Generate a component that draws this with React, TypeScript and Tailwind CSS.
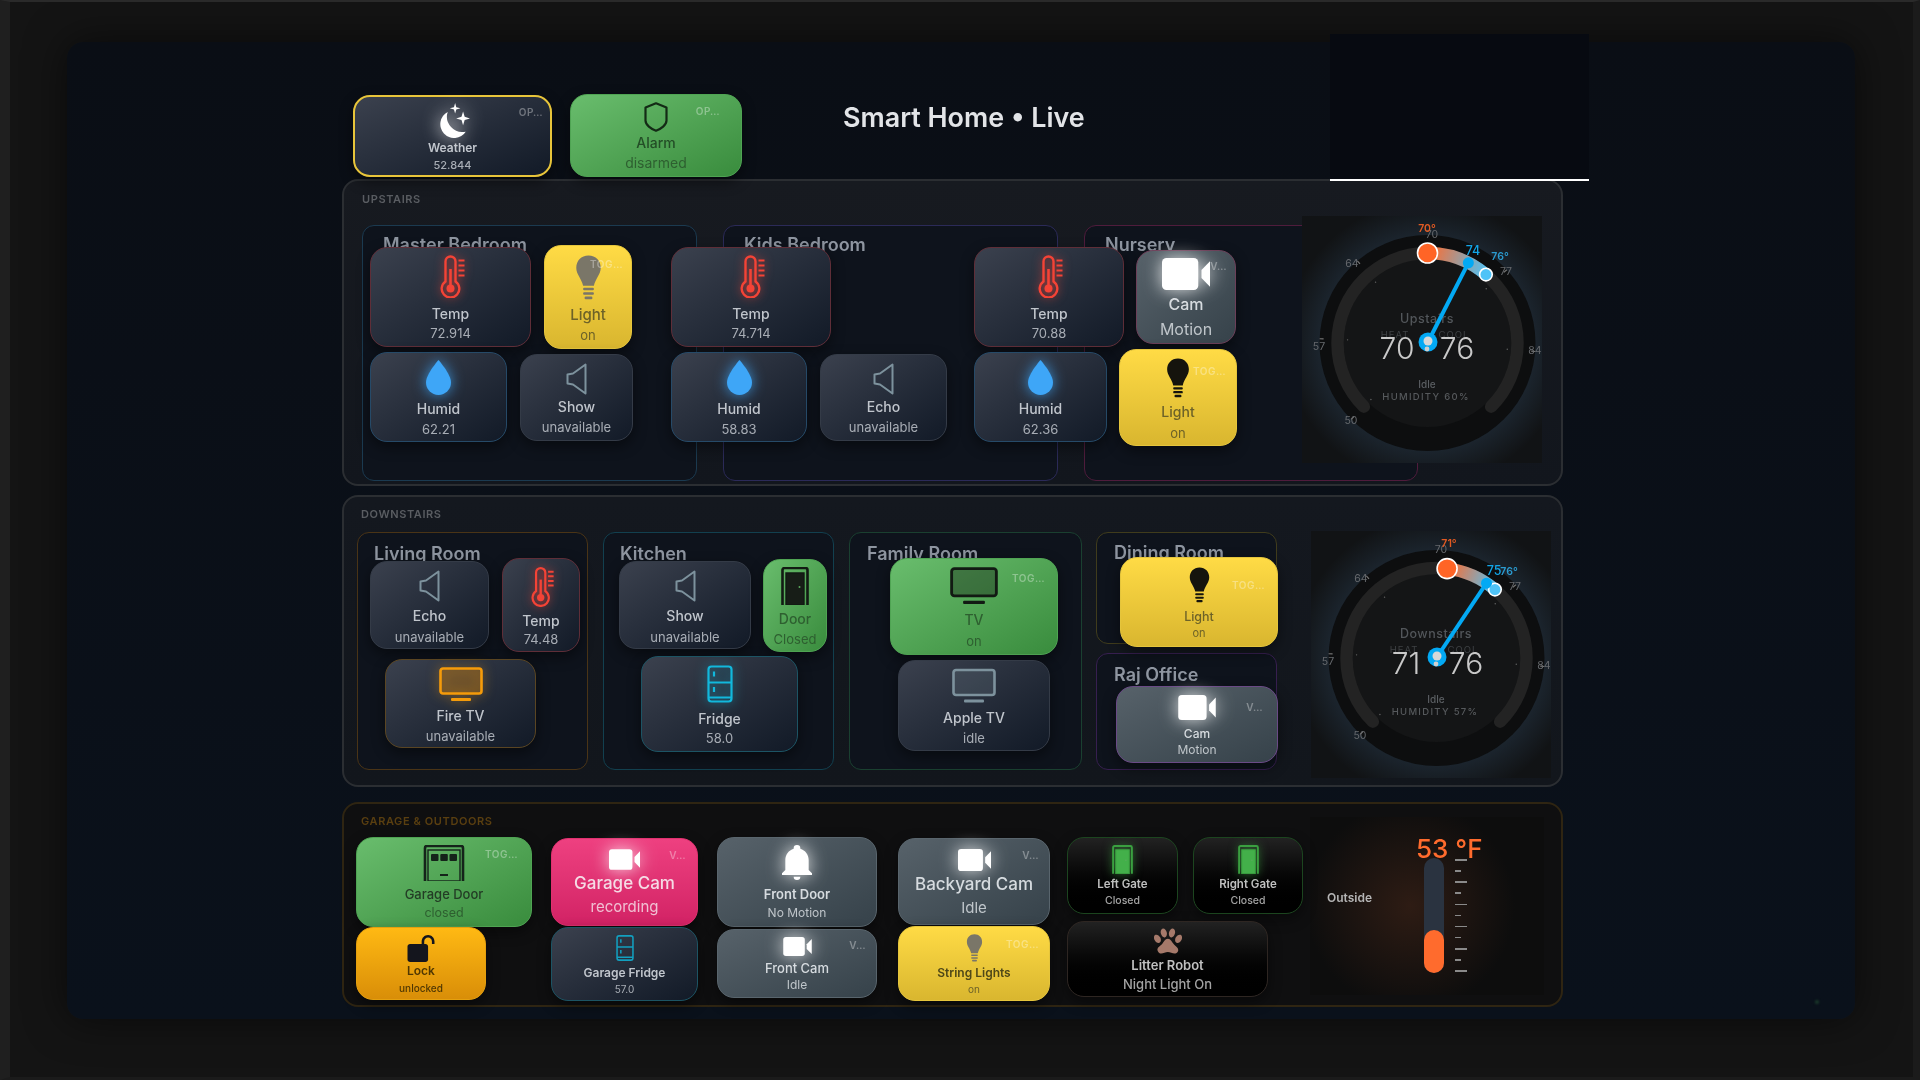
import React from "react";

type IP = { className?: string };
const Thermo = ({ className }: IP) => (
  <svg viewBox="0 0 26 43" className={`ml-[4px] ${className}`} fill="none" stroke="currentColor">
    <path d="M5.5 26.5V6.5a5 5 0 0 1 10 0v20a8.8 8.8 0 1 1-10 0Z" strokeWidth="2.4" />
    <circle cx="10.5" cy="33.5" r="4" fill="currentColor" stroke="none" />
    <path d="M10.5 14V31" strokeWidth="2.6" />
    <path d="M18.5 5.5h6M18.5 10.5h6M18.5 15.5h6M18.5 20.5h6" strokeWidth="2.2" />
  </svg>
);
const Drop = ({ className }: IP) => (
  <svg viewBox="6 3.2 12 16.8" className={className} fill="currentColor">
    <path d="M12,20A6,6 0 0,1 6,14C6,10 12,3.25 12,3.25C12,3.25 18,10 18,14A6,6 0 0,1 12,20Z" />
  </svg>
);
const Speaker = ({ className }: IP) => (
  <svg viewBox="0 0 21 32" className={className} fill="none" stroke="currentColor" strokeWidth="2" strokeLinejoin="round">
    <path d="M1.5 11.5 7 10.5 19.5 1.5V30.5L7 21.5 1.5 20.5Z" />
  </svg>
);
const Bulb = ({ className }: IP) => (
  <svg viewBox="0 0 27 46" className={className} fill="currentColor">
    <path d="M13.5 0.5C6 0.5 1 6 1 13c0 7 5.5 11 7 18.5h11C20.5 24 26 20 26 13 26 6 21 .5 13.5 .5Z" />
    <rect x="8" y="33.5" width="11" height="2.6" rx="1" />
    <rect x="8" y="38" width="11" height="2.6" rx="1" />
    <rect x="9.5" y="42.4" width="8" height="2.8" rx="1.2" />
  </svg>
);
const Video = ({ className }: IP) => (
  <svg viewBox="3 6 18 12" className={className} fill="currentColor">
    <rect x="3" y="6" width="13.6" height="12" rx="1.7" />
    <path d="M17.8 10.5 21 7.2V16.8L17.8 13.5Z" />
  </svg>
);
const Bell = ({ className }: IP) => (
  <svg viewBox="3 2 18 21" className={className} fill="currentColor">
    <path d="M21,19V20H3V19L5,17V11C5,7.9 7.03,5.17 10,4.29C10,4.19 10,4.1 10,4A2,2 0 0,1 12,2A2,2 0 0,1 14,4C14,4.1 14,4.19 14,4.29C16.97,5.17 19,7.9 19,11V17L21,19M14,21A2,2 0 0,1 12,23A2,2 0 0,1 10,21" />
  </svg>
);
const Tv = ({ className, inner }: IP & { inner: string }) => (
  <svg viewBox="0 0 44 34" className={className} fill="none" stroke="currentColor">
    <rect x="1.5" y="1.5" width="41" height="25" rx="2.5" fill={inner} strokeWidth="2.6" />
    <rect x="12" y="31" width="20" height="3" rx="1" fill="currentColor" stroke="none" />
  </svg>
);
const Fridge = ({ className }: IP) => (
  <svg viewBox="0 0 26 38" className={className} fill="none" stroke="currentColor" strokeWidth="2.2">
    <rect x="1.5" y="1.5" width="23" height="35" rx="3" />
    <path d="M1.5 17.5h23M1.5 32.5h23M7 6.5v5M7 22v5" />
  </svg>
);
const Door = ({ className, fill }: IP & { fill: string }) => (
  <svg viewBox="0 0 28 38" className={className}>
    <path d="M1.5 38V3a2 2 0 0 1 2-2h21a2 2 0 0 1 2 2v35" fill="none" stroke="currentColor" strokeWidth="2.6" />
    <path d="M5 38V6h18v32Z" fill={fill} stroke="currentColor" strokeWidth="1.4" />
    <circle cx="18.5" cy="20" r="1" fill="#5aa95d" />
  </svg>
);
const Garage = ({ className }: IP) => (
  <svg viewBox="0 0 42 36" className={className} fill="currentColor">
    <path d="M2 36V3a2 2 0 0 1 2-2h34a2 2 0 0 1 2 2v33" fill="none" stroke="currentColor" strokeWidth="2.6" />
    <rect x="5" y="5" width="32" height="31" fill="none" stroke="currentColor" strokeWidth="1.4" />
    <rect x="8" y="9" width="7.5" height="7" rx="1" />
    <rect x="17.3" y="9" width="7.5" height="7" rx="1" />
    <rect x="26.5" y="9" width="7.5" height="7" rx="1" />
    <rect x="17" y="29" width="8" height="2" />
  </svg>
);
const LockOpen = ({ className }: IP) => (
  <svg viewBox="2 1 21 21" className={className} fill="currentColor">
    <path d="M18,1C15.24,1 13,3.24 13,6V8H4C2.9,8 2,8.9 2,10V20C2,21.1 2.9,22 4,22H16C17.1,22 18,21.1 18,20V10C18,8.9 17.1,8 16,8H15V6C15,4.34 16.34,3 18,3C19.66,3 21,4.34 21,6V8H23V6C23,3.24 20.76,1 18,1Z" />
  </svg>
);
const Paw = ({ className }: IP) => (
  <svg viewBox="2 2.9 20 18.2" className={className} fill="currentColor">
    <path d="M8.35,3C9.53,2.83 10.78,4.12 11.14,5.9C11.5,7.67 10.85,9.25 9.67,9.43C8.5,9.61 7.24,8.32 6.87,6.54C6.5,4.77 7.17,3.19 8.35,3M15.5,3C16.69,3.19 17.35,4.77 17,6.54C16.62,8.32 15.37,9.61 14.19,9.43C13,9.25 12.35,7.67 12.72,5.9C13.08,4.12 14.33,2.83 15.5,3M3,7.6C4.14,7.11 5.69,8 6.5,9.55C7.26,11.13 7,12.79 5.87,13.28C4.74,13.77 3.2,12.89 2.41,11.32C1.62,9.75 1.9,8.08 3,7.6M21,7.6C22.1,8.08 22.38,9.75 21.59,11.32C20.8,12.89 19.26,13.77 18.13,13.28C17,12.79 16.74,11.13 17.5,9.55C18.31,8 19.86,7.11 21,7.6M19.33,18.38C19.37,19.32 18.65,20.36 17.79,20.75C16,21.57 13.88,19.87 11.89,19.87C9.9,19.87 7.76,21.64 6,20.75C5,20.26 4.31,18.96 4.44,17.88C4.62,16.39 6.41,15.59 7.47,14.5C8.88,13.09 9.88,10.44 11.89,10.44C13.89,10.44 14.95,13.05 16.3,14.5C17.41,15.72 19.26,16.75 19.33,18.38Z" />
  </svg>
);
const Moon = ({ className }: IP) => (
  <svg viewBox="0 0 32 33" className={className} fill="currentColor">
    <path d="M11 8.5A13 13 0 1 0 28 27 14.5 14.5 0 0 1 11 8.5Z" />
    <path d="M18 0l1.1 3.9L23 5l-3.9 1.1L18 10l-1.1-3.9L13 5l3.9-1.1Z" />
    <path d="M25.5 8l1.5 5 5 1.5-5 1.5-1.5 5-1.5-5-5-1.5 5-1.5Z" />
  </svg>
);
const Shield = ({ className }: IP) => (
  <svg viewBox="0 0 24 30" className={className} fill="none" stroke="currentColor" strokeWidth="2.2" strokeLinejoin="round">
    <path d="M12 1.3 22.5 5.5V18.5C22.5 23 17 27 12 28.8 7 27 1.5 23 1.5 18.5V5.5Z" />
  </svg>
);

const looks: Record<string, string> = {
  dark: "bg-linear-to-br from-[#3b414e] to-[#121a27] text-[#c0c5cc]",
  yellow: "bg-linear-to-b from-[#ffdb45] to-[#d9b62f] border-[#e5c53c] text-[#6d6228]",
  green: "bg-linear-to-br from-[#69bd6d] to-[#398c3d] border-[#4fa453] text-[#2e5f30]",
  amber: "bg-linear-to-b from-[#ffb913] to-[#d98e08] border-[#e5a00e] text-[#4f3703]",
  pink: "bg-linear-to-b from-[#ee4080] to-[#d22265] border-[#e0306f] text-[#f5dbe5]",
  cam: "bg-linear-to-br from-[#57626a] to-[#36424a] text-[#d6dbdf]",
  black: "bg-linear-to-b from-[#222222] to-[#000000] text-[#c0c0c0]",
};

function Card(p: {
  c: string;
  v?: string;
  icon: React.ReactNode;
  n: string;
  s: string;
  nc: string;
  sc: string;
  tag?: string;
  tc?: string;
}) {
  const v = p.v ?? "dark";
  const soft = v === "dark" || v === "cam" || v === "black" || v === "pink";
  return (
    <div
      className={`relative z-10 shrink-0 flex flex-col items-center rounded-[17px] border-[1.5px] shadow-[0_5px_14px_rgba(0,0,0,0.45)] ${looks[v]} ${p.c}`}
    >
      {p.icon}
      <div className={`font-medium whitespace-nowrap leading-[18px] ${p.nc}`}>{p.n}</div>
      <div className={`whitespace-nowrap leading-[18px] ${soft ? "opacity-85" : ""} ${p.sc}`}>{p.s}</div>
      {p.tag && (
        <div className={`absolute text-[10px] leading-[12px] font-semibold tracking-[0.5px] text-white/35 ${p.tc}`}>{p.tag}</div>
      )}
    </div>
  );
}

const red = "text-[#f44336] drop-shadow-[0_0_5px_rgba(244,67,54,0.7)]";
const blue = "text-[#3ea6f7] drop-shadow-[0_0_7px_rgba(62,166,247,0.8)]";
const glow = "text-white drop-shadow-[0_0_9px_rgba(255,255,255,0.85)]";
const spk = "text-[#7d929d]";

function Room(p: { c: string; title: string; tc: string; children?: React.ReactNode }) {
  return (
    <div className={`shrink-0 rounded-[12px] border-[1.5px] bg-[#0e131c] ${p.c}`}>
      <div className={`text-[18px] leading-[24px] font-semibold whitespace-nowrap text-[#8e95a0] ${p.tc}`}>{p.title}</div>
      {p.children}
    </div>
  );
}

function polar(a: number, r: number, cx = 125.5, cy = 127) {
  const t = (a * Math.PI) / 180;
  return [cx + r * Math.sin(t), cy - r * Math.cos(t)];
}
const ang = (v: number) => -135 + (v - 50) * 6.75;
const arc = (a: number, b: number, r: number) => {
  const [x1, y1] = polar(a, r);
  const [x2, y2] = polar(b, r);
  return `M${x1} ${y1}A${r} ${r} 0 ${b - a > 180 ? 1 : 0} 1 ${x2} ${y2}`;
};

function Gauge(p: {
  id: string;
  c: string;
  title: string;
  heat: number;
  cool: number;
  cur: number;
  hum: string;
  heatX: number;
  curX: number;
  curY: number;
}) {
  const ha = ang(p.heat);
  const ca = ang(p.cool);
  const [hx, hy] = polar(ha, 90);
  const [cx, cy] = polar(ca, 90);
  const [nx, ny] = polar(ang(p.cur), 90);
  const labels: [number, number, string][] = [
    [50, 47, "64"], [17, 130, "57"], [233, 134, "84"], [49, 204, "50"], [130, 18, "70"], [204, 55, "77"],
  ];
  const ticks = [50, 57, 64, 77, 84];
  return (
    <div className={`relative z-20 shrink-0 w-[240px] h-[247px] bg-[#111315] ${p.c}`}>
      <svg viewBox="0 0 240 247" className="w-[240px] h-[247px] [font-family:Inter,sans-serif]">
        <defs>
          <radialGradient id={`${p.id}g`} cx="50%" cy="50%" r="50%">
            <stop offset="76%" stopColor="#1b242d" />
            <stop offset="100%" stopColor="#1b242d" stopOpacity="0" />
          </radialGradient>
          <linearGradient id={`${p.id}a`} gradientUnits="userSpaceOnUse" x1={hx} y1={hy} x2={cx} y2={cy}>
            <stop offset="0%" stopColor="#ff6b2d" />
            <stop offset="100%" stopColor="#4fc3f7" />
          </linearGradient>
        </defs>
        <circle cx="125.5" cy="127" r="142" fill={`url(#${p.id}g)`} />
        <circle cx="125.5" cy="127" r="108" fill="#0d0e0f" />
        <circle cx="125.5" cy="127" r="84" fill="#141516" />
        <path d={arc(-135, 135, 90)} fill="none" stroke="#232323" strokeWidth="12.5" strokeLinecap="round" />
        <path d={arc(ha, ca, 90)} fill="none" stroke={`url(#${p.id}a)`} strokeWidth="12.5" />
        {ticks.map((t) => {
          const [a, b] = polar(ang(t), 104);
          const [c, d] = polar(ang(t), 108);
          const [e, f] = polar(ang(t), 80);
          return (
            <g key={t}>
              <line x1={a} y1={b} x2={c} y2={d} stroke="#777" strokeWidth="1.2" />
              <circle cx={e} cy={f} r="0.7" fill="#666" />
            </g>
          );
        })}
        {labels.map((l) => (
          <text key={l[2]} x={l[0]} y={l[1] + 4} textAnchor="middle" fontSize="10.5" fill="#66696d">{l[2]}</text>
        ))}
        <circle cx={hx} cy={hy} r="10" fill="#ff6426" stroke="#fff" strokeWidth="1.6" />
        <circle cx={cx} cy={cy} r="6.3" fill="#4fc3f7" stroke="#fff" strokeWidth="1.6" />
        <text x="125" y="107" textAnchor="middle" fontSize="12.5" fontWeight="500" fill="#52565a" letterSpacing="0.5">{p.title}</text>
        <text x="93" y="122" textAnchor="middle" fontSize="9.5" fill="#3e4144" letterSpacing="1">HEAT</text>
        <text x="152" y="122" textAnchor="middle" fontSize="9.5" fill="#3e4144" letterSpacing="1">COOL</text>
        <text x="95" y="143" textAnchor="middle" fontSize="30" fontWeight="300" fill="#c9c9c9">{p.heat}</text>
        <text x="155" y="143" textAnchor="middle" fontSize="30" fontWeight="300" fill="#c9c9c9">{p.cool}</text>
        <line x1="126" y1="126" x2={nx} y2={ny} stroke="#03a9f4" strokeWidth="4" />
        <circle cx={nx} cy={ny} r="5.5" fill="#03a9f4" />
        <circle cx="126" cy="126" r="9.5" fill="#03a9f4" />
        <circle cx="126" cy="125" r="4.5" fill="#d8d8d8" />
        <circle cx="125" cy="133" r="2.4" fill="#d0d0d0" />
        <text x="125" y="172" textAnchor="middle" fontSize="10" fontWeight="500" fill="#5b5f63">Idle</text>
        <text x="124" y="184" textAnchor="middle" fontSize="9.5" fontWeight="500" fill="#56595c" letterSpacing="1.3">{p.hum}</text>
        <text x={p.heatX} y="16" textAnchor="middle" fontSize="10.5" fontWeight="600" fill="#e25a22">{p.heat}°</text>
        <text x="198" y="44" textAnchor="middle" fontSize="10.5" fontWeight="600" fill="#2b9bd0">{p.cool}°</text>
        <text x={p.curX} y={p.curY} textAnchor="middle" fontSize="12.5" fontWeight="500" fill="#12a5e8">{p.cur}</text>
      </svg>
    </div>
  );
}

const tick = "h-[1.5px] bg-[#8a8a8a]";

export default function App() {
  const t14 = "text-[14px]";
  const s13 = "text-[13px]";
  return (
    <div className="relative w-[1920px] h-[1080px] overflow-hidden bg-[#141414] border-t-2 border-l-[10px] border-r-[7px] border-b-[3px] border-t-[#2a2a2a] border-l-[#1f1f1f] border-r-[#1b1b1b] border-b-[#1b1b1b] [font-family:Inter,sans-serif] blur-[0.5px]">
      <div className="relative ml-[57px] mt-[40px] w-[1788px] h-[977px] rounded-[16px] bg-linear-to-b from-[#0a0e15] to-[#0a111b] shadow-[0_0_40px_rgba(0,0,0,0.55)]">
        <div className="absolute right-[36px] bottom-[15px] w-[4px] h-[4px] rounded-full bg-[#1b3a2c] blur-[1px]" />
        {/* header */}
        <div className="flex pl-[286px] pt-[53px] h-[137px]">
          <Card
            c="w-[199px] h-[82px] pt-[6px] rounded-[16px] border-[2.5px]! border-[#e8c53a] shadow-[0_0_26px_rgba(232,197,58,0.14)]"
            icon={<Moon className={`w-[34px] h-[35px] ${glow}`} />}
            n="Weather"
            s="52.844"
            nc="text-[12px] mt-[1px] font-semibold"
            sc="text-[11px] mt-[-1px] font-medium"
            tag="OP…"
            tc="top-[9px] right-[7px]"
          />
          <Card
            v="green"
            c="ml-[18px] -mt-px w-[172px] h-[83px] pt-[7px] rounded-[16px]"
            icon={<Shield className="w-[24px] h-[30px] text-[#132a15]" />}
            n="Alarm"
            s="disarmed"
            nc="text-[14px] mt-[2px] text-[#234d26]"
            sc="text-[14px] mt-[2px]"
            tag="OP…"
            tc="top-[10px] right-[21px]"
          />
          <div className="ml-[101px] mt-[6px] h-[32px] text-[26.9px] leading-[32px] font-semibold whitespace-nowrap text-[#e2e4e7] w-[242px]">Smart Home • Live</div>
          <div className="relative z-30 ml-[245px] -mt-[61px] mb-[-2px] w-[259px] h-[147px] self-end bg-[#070a11] border-b-2 border-white" />
        </div>

        <div className="ml-[275px] w-[1221px] flex flex-col">
          {/* UPSTAIRS */}
          <section className="h-[307px] rounded-[16px] border-2 border-[#2b2e32] bg-linear-to-b from-[#171a20] to-[#12161d] pl-[18px] pt-[10px]">
            <div className="h-[16px] text-[11px] leading-[16px] font-semibold tracking-[0.6px] text-[#5a5d62]">UPSTAIRS</div>
            <div className="flex mt-[18px] items-start">
              <Room c="w-[335px] h-[256px] border-[#1b3a50]" title="Master Bedroom" tc="h-[19px] pt-[7px] pl-[20px]">
                <div className="flex items-center gap-[13px] ml-[7px] h-[104px]">
                  <Card c="w-[161px] h-[100px] pt-[7px] border-[#5f2e38]" icon={<Thermo className={`w-[26px] h-[43px] ${red}`} />} n="Temp" s="72.914" nc={`${t14} mt-[7px]`} sc={`${s13} mt-[1px]`} />
                  <Card v="yellow" c="w-[88px] h-[104px] pt-[9px]" icon={<Bulb className="w-[27px] h-[45px] text-[#7a7668]" />} n="Light" s="on" nc="text-[15px] mt-[6px]" sc={`${s13} mt-[2px]`} tag="TOG…" tc="top-[12px] right-[8px]" />
                </div>
                <div className="flex items-center gap-[13px] ml-[7px] mt-[3px] h-[90px]">
                  <Card c="w-[137px] h-[90px] pt-[7px] border-[#264a68]" icon={<Drop className={`w-[25px] h-[35px] ${blue}`} />} n="Humid" s="62.21" nc={`${t14} mt-[5px]`} sc={`${s13} mt-[2px]`} />
                  <Card c="w-[113px] h-[87px] pt-[8px] border-[#343b47]" icon={<Speaker className={`w-[21px] h-[32px] ${spk}`} />} n="Show" s="unavailable" nc={`${t14} mt-[3px]`} sc={`${s13} mt-[2px]`} />
                </div>
              </Room>
              <Room c="ml-[26px] w-[335px] h-[256px] border-[#2b2a58]" title="Kids Bedroom" tc="h-[19px] pt-[7px] pl-[20px]">
                <div className="flex items-center -ml-[53px] h-[104px]">
                  <Card c="w-[160px] h-[100px] pt-[7px] border-[#5f2e38]" icon={<Thermo className={`w-[26px] h-[43px] ${red}`} />} n="Temp" s="74.714" nc={`${t14} mt-[7px]`} sc={`${s13} mt-[1px]`} />
                </div>
                <div className="flex items-center gap-[13px] -ml-[53px] mt-[3px] h-[90px]">
                  <Card c="w-[136px] h-[90px] pt-[7px] border-[#264a68]" icon={<Drop className={`w-[25px] h-[35px] ${blue}`} />} n="Humid" s="58.83" nc={`${t14} mt-[5px]`} sc={`${s13} mt-[2px]`} />
                  <Card c="w-[127px] h-[87px] pt-[8px] border-[#343b47]" icon={<Speaker className={`w-[21px] h-[32px] ${spk}`} />} n="Echo" s="unavailable" nc={`${t14} mt-[3px]`} sc={`${s13} mt-[2px]`} />
                </div>
              </Room>
              <Room c="ml-[26px] w-[334px] h-[256px] border-[#4f1c3c]" title="Nursery" tc="h-[19px] pt-[7px] pl-[20px]">
                <div className="flex items-center gap-[12px] -ml-[111px] h-[104px]">
                  <Card c="w-[150px] h-[100px] pt-[7px] border-[#5f2e38]" icon={<Thermo className={`w-[26px] h-[43px] ${red}`} />} n="Temp" s="70.88" nc={`${t14} mt-[7px]`} sc={`${s13} mt-[1px]`} />
                  <Card v="cam" c="w-[100px] h-[94px] pt-[7px] border-[#6b3f58]" icon={<Video className={`w-[48px] h-[32px] ${glow}`} />} n="Cam" s="Motion" nc="text-[16px] mt-[5px]" sc="text-[16px] mt-[7px]" tag="V…" tc="top-[9px] right-[8px]" />
                </div>
                <div className="flex items-center gap-[12px] -ml-[111px] mt-[3px] h-[90px]">
                  <Card c="w-[133px] h-[90px] pt-[7px] border-[#264a68]" icon={<Drop className={`w-[25px] h-[35px] ${blue}`} />} n="Humid" s="62.36" nc={`${t14} mt-[5px]`} sc={`${s13} mt-[2px]`} />
                  <Card v="yellow" c="w-[118px] h-[97px] pt-[8px]" icon={<Bulb className="w-[24px] h-[40px] text-[#15140d]" />} n="Light" s="on" nc="text-[14px] mt-[5px]" sc={`${s13} mt-[3px]`} tag="TOG…" tc="top-[15px] right-[10px]" />
                </div>
              </Room>
              <Gauge id="up" c="-ml-[116px] -mt-[9px]" title="Upstairs" heat={70} cool={76} cur={74} hum="HUMIDITY 60%" heatX={125} curX={171} curY={39} />
            </div>
          </section>

          {/* DOWNSTAIRS */}
          <section className="mt-[9px] h-[292px] rounded-[16px] border-2 border-[#2b2e32] bg-linear-to-b from-[#14181f] to-[#12161c] pl-[13px] pt-[9px]">
            <div className="ml-[4px] h-[16px] text-[11px] leading-[16px] font-semibold tracking-[0.6px] text-[#5a5d62]">DOWNSTAIRS</div>
            <div className="flex mt-[10px] items-start">
              <Room c="w-[231px] h-[238px] border-[#4a3416]" title="Living Room" tc="h-[25px] pt-[9px] pl-[16px]">
                <div className="flex items-center gap-[13px] ml-[12px] h-[94px]">
                  <Card c="w-[119px] h-[88px] pt-[8px] border-[#343b47]" icon={<Speaker className={`w-[21px] h-[32px] ${spk}`} />} n="Echo" s="unavailable" nc={`${t14} mt-[5px]`} sc={`${s13} mt-[3px]`} />
                  <Card c="w-[78px] h-[94px] pt-[7px] border-[#5f2e38]" icon={<Thermo className={`w-[24px] h-[41px] ${red}`} />} n="Temp" s="74.48" nc={`${t14} mt-[5px]`} sc={s13} />
                </div>
                <Card c="ml-[27px] mt-[7px] w-[151px] h-[89px] pt-[7px] border-[#5a4522]" icon={<Tv inner="rgba(255,152,0,0.22)" className="w-[44px] h-[34px] text-[#f59b0a] drop-shadow-[0_0_6px_rgba(245,155,10,0.6)]" />} n="Fire TV" s="unavailable" nc={`${t14} mt-[6px]`} sc={`${s13} mt-[2px]`} />
              </Room>
              <Room c="ml-[15px] w-[231px] h-[238px] border-[#12404f]" title="Kitchen" tc="h-[25px] pt-[9px] pl-[16px]">
                <div className="flex items-center gap-[12px] ml-[15px] h-[94px]">
                  <Card c="w-[132px] h-[88px] pt-[8px] border-[#343b47]" icon={<Speaker className={`w-[21px] h-[32px] ${spk}`} />} n="Show" s="unavailable" nc={`${t14} mt-[5px]`} sc={`${s13} mt-[3px]`} />
                  <Card v="green" c="w-[64px] h-[93px] pt-[7px]" icon={<Door fill="#171d17" className="w-[28px] h-[38px] text-[#121a13]" />} n="Door" s="Closed" nc={`${t14} mt-[5px]`} sc={`${s13} mt-[2px]`} />
                </div>
                <Card c="ml-[37px] mt-[4px] w-[157px] h-[96px] pt-[8px] border-[#1c5464]" icon={<Fridge className="w-[26px] h-[38px] text-[#12b8dc] drop-shadow-[0_0_6px_rgba(18,184,220,0.7)]" />} n="Fridge" s="58.0" nc={`${t14} mt-[7px]`} sc={`${s13} mt-[1px]`} />
              </Room>
              <Room c="ml-[15px] w-[233px] h-[238px] border-[#1a4030]" title="Family Room" tc="h-[25px] pt-[9px] pl-[17px]">
                <Card v="green" c="ml-[40px] w-[168px] h-[97px] pt-[7px]" icon={<Tv inner="rgba(20,30,20,0.4)" className="w-[48px] h-[39px] text-[#121a13]" />} n="TV" s="on" nc={`${t14} mt-[6px]`} sc={`${s13} mt-[3px]`} tag="TOG…" tc="top-[13px] right-[12px]" />
                <Card c="ml-[48px] mt-[5px] w-[152px] h-[91px] pt-[7px] border-[#343b47]" icon={<Tv inner="rgba(125,146,157,0.2)" className={`w-[44px] h-[35px] ${spk}`} />} n="Apple TV" s="idle" nc={`${t14} mt-[6px]`} sc={`${s13} mt-[2px]`} />
              </Room>
              <div className="ml-[14px] w-[181px] shrink-0">
                <Room c="w-[181px] h-[112px] border-[#403c1c]" title="Dining Room" tc="h-[24px] pt-[8px] pl-[17px]">
                  <Card v="yellow" c="ml-[23px] w-[158px] h-[90px] pt-[9px]" icon={<Bulb className="w-[21px] h-[36px] text-[#15140d]" />} n="Light" s="on" nc="text-[12.5px] mt-[5px]" sc="text-[11px] mt-[-2px]" tag="TOG…" tc="top-[21px] right-[12px]" />
                </Room>
                <Room c="mt-[9px] w-[181px] h-[117px] border-[#371f50]" title="Raj Office" tc="h-[32px] pt-[9px] pl-[17px]">
                  <Card v="cam" c="ml-[19px] w-[162px] h-[77px] pt-[8px] border-[#6a4a86]" icon={<Video className={`w-[38px] h-[25px] ${glow}`} />} n="Cam" s="Motion" nc="text-[12px] mt-[5px]" sc="text-[12px] mt-[-2px]" tag="V…" tc="top-[14px] right-[14px]" />
                </Room>
              </div>
              <Gauge id="down" c="ml-[34px] -mt-px" title="Downstairs" heat={71} cool={76} cur={75} hum="HUMIDITY 57%" heatX={138} curX={183} curY={44} />
            </div>
          </section>

          {/* GARAGE */}
          <section className="mt-[15px] h-[205px] rounded-[16px] border-2 border-[#2f2512] bg-[#0f0f10] pl-[12px] pt-[9px]">
            <div className="ml-[5px] h-[16px] text-[11px] leading-[16px] font-semibold tracking-[0.6px] text-[#5a3f10]">GARAGE &amp; OUTDOORS</div>
            <div className="flex mt-[8px] items-start">
              <div className="w-[176px] shrink-0">
                <Card v="green" c="w-[176px] h-[90px] pt-[7px]" icon={<Garage className="w-[42px] h-[36px] text-[#15231a]" />} n="Garage Door" s="closed" nc="text-[13px] mt-[4px] text-[#233c25]" sc="text-[12.5px] mt-[1px]" tag="TOG…" tc="top-[10px] right-[13px]" />
                <Card v="amber" c="w-[130px] h-[73px] pt-[7px]" icon={<LockOpen className="w-[30px] h-[27px] text-[#14151d]" />} n="Lock" s="unlocked" nc="text-[12px] font-semibold" sc="text-[10px] mt-[-1px] font-medium" />
              </div>
              <div className="ml-[19px] pt-[1px] w-[147px] shrink-0">
                <Card v="pink" c="w-[147px] h-[88px] pt-[10px]" icon={<Video className={`w-[31px] h-[21px] ${glow}`} />} n="Garage Cam" s="recording" nc="text-[17px] mt-[4px]" sc="text-[15px] mt-[6px]" tag="V…" tc="top-[10px] right-[11px]" />
                <Card c="mt-[1px] w-[147px] h-[74px] pt-[6px] border-[#1c5464]" icon={<Fridge className="w-[18px] h-[28px] text-[#12a0c0]" />} n="Garage Fridge" s="57.0" nc="text-[12px] mt-[2px] font-semibold" sc="text-[10px] mt-[-2px]" />
              </div>
              <div className="ml-[19px] w-[160px] shrink-0">
                <Card v="cam" c="w-[160px] h-[90px] pt-[7px] border-[#59656d]" icon={<Bell className={`w-[30px] h-[35px] ${glow}`} />} n="Front Door" s="No Motion" nc="text-[13px] mt-[5px] font-semibold" sc="text-[12px] mt-[1px]" />
                <Card v="cam" c="mt-[2px] w-[160px] h-[69px] pt-[7px] border-[#59656d]" icon={<Video className={`w-[29px] h-[19px] ${glow}`} />} n="Front Cam" s="Idle" nc="text-[13px] mt-[3px]" sc="text-[12px] mt-[-1px]" tag="V…" tc="top-[9px] right-[10px]" />
              </div>
              <div className="ml-[21px] pt-[1px] w-[152px] shrink-0">
                <Card v="cam" c="w-[152px] h-[87px] pt-[10px] border-[#59656d]" icon={<Video className={`w-[33px] h-[22px] ${glow}`} />} n="Backyard Cam" s="Idle" nc="text-[17px] mt-[4px]" sc="text-[15px] mt-[6px]" tag="V…" tc="top-[10px] right-[10px]" />
                <Card v="yellow" c="mt-[1px] w-[152px] h-[75px] pt-[7px]" icon={<Bulb className="w-[17px] h-[28px] text-[#7a7668]" />} n="String Lights" s="on" nc="text-[12px] mt-[2px] font-semibold text-[#4f4818]" sc="text-[10px] mt-[-2px]" tag="TOG…" tc="top-[11px] right-[10px]" />
              </div>
              <div className="ml-[17px] w-[236px] shrink-0">
                <div className="flex gap-[15px]">
                  <Card v="black" c="w-[111px] h-[77px] pt-[7px] border-[#1c451f]" icon={<Door fill="#43b04a" className="w-[21px] h-[29px] text-[#3aa040] drop-shadow-[0_0_5px_rgba(67,176,74,0.6)]" />} n="Left Gate" s="Closed" nc="text-[11.5px] mt-[1px] font-semibold" sc="text-[10.5px] mt-[-1px] font-medium" />
                  <Card v="black" c="w-[110px] h-[77px] pt-[7px] border-[#1c451f]" icon={<Door fill="#43b04a" className="w-[21px] h-[29px] text-[#3aa040] drop-shadow-[0_0_5px_rgba(67,176,74,0.6)]" />} n="Right Gate" s="Closed" nc="text-[11.5px] mt-[1px] font-semibold" sc="text-[10.5px] mt-[-1px] font-medium" />
                </div>
                <Card v="black" c="mt-[7px] w-[201px] h-[76px] pt-[6px] border-[#2e2622]" icon={<Paw className="w-[28px] h-[26px] text-[#a5796a]" />} n="Litter Robot" s="Night Light On" nc="text-[13px] mt-[2px] font-semibold" sc="text-[13px] mt-[1px] font-medium" />
              </div>
              <div className="ml-[7px] -mt-[20px] w-[234px] h-[178px] shrink-0 flex bg-[#0d0d0d] bg-[radial-gradient(circle_at_43%_50%,#2e1c14_0%,#0d0d0d_65%)]">
                <div className="ml-[17px] mt-[73px] text-[12px] leading-[16px] font-semibold text-[#b5b5b5]">Outside</div>
                <div className="ml-[52px] flex flex-col items-start">
                  <div className="relative z-10 -ml-[8px] mt-[16px] h-[32px] text-[26px] leading-[32px] font-medium whitespace-nowrap text-[#ff6b2d]">53 °F</div>
                  <div className="-mt-[7px] flex">
                    <div className="w-[20px] h-[115px] rounded-full bg-[#2a3340] flex flex-col justify-end">
                      <div className="h-[43px] rounded-full bg-[#ff6b2d]" />
                    </div>
                    <div className="ml-[11px] h-[115px] pt-[1px] pb-[1px] flex flex-col justify-between">
                      <div className={`w-[12px] ${tick}`} />
                      <div className={`w-[6px] ${tick}`} />
                      <div className={`w-[12px] ${tick}`} />
                      <div className={`w-[6px] ${tick}`} />
                      <div className={`w-[12px] ${tick}`} />
                      <div className={`w-[6px] ${tick}`} />
                      <div className={`w-[12px] ${tick}`} />
                      <div className={`w-[6px] ${tick}`} />
                      <div className={`w-[12px] ${tick}`} />
                      <div className={`w-[6px] ${tick}`} />
                      <div className={`w-[12px] ${tick}`} />
                    </div>
                  </div>
                </div>
              </div>
            </div>
          </section>
        </div>
      </div>
    </div>
  );
}
